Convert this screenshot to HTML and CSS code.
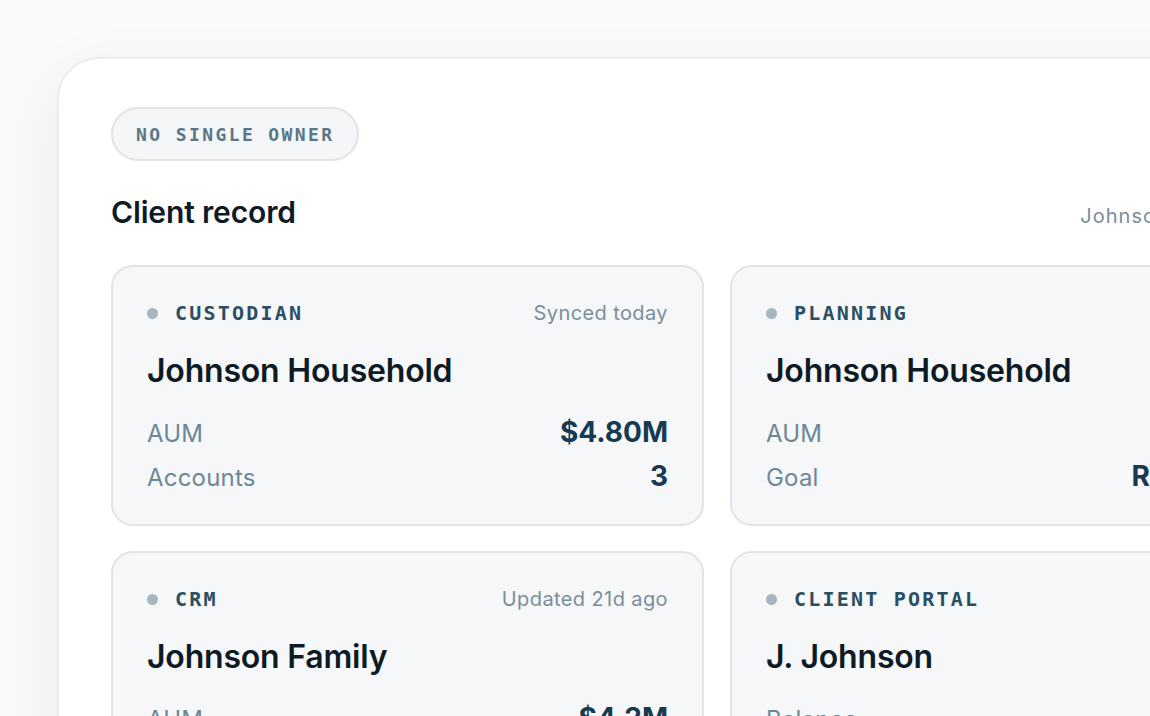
FILE: index.html
```html
<!DOCTYPE html>
<html lang="en">
<head>
<meta charset="utf-8">
<title>Client record</title>
<link rel="stylesheet" href="styles.css">
</head>
<body>
<main class="stage">
  <section class="panel">
    <span class="pill">NO SINGLE OWNER</span>
    <header class="panel-head">
      <h1 class="panel-title">Client record</h1>
      <span class="panel-meta">Johnson · four systems</span>
    </header>
    <div class="grid">
      <article class="card">
        <div class="card-top">
          <span class="source"><span class="dot"></span>CUSTODIAN</span>
          <span class="stamp">Synced today</span>
        </div>
        <h2 class="card-name">Johnson Household</h2>
        <dl class="facts">
          <div class="fact"><dt>AUM</dt><dd>$4.80M</dd></div>
          <div class="fact"><dt>Accounts</dt><dd>3</dd></div>
        </dl>
      </article>
      <article class="card">
        <div class="card-top">
          <span class="source"><span class="dot"></span>PLANNING</span>
          <span class="stamp">3mo ago</span>
        </div>
        <h2 class="card-name">Johnson Household</h2>
        <dl class="facts">
          <div class="fact"><dt>AUM</dt><dd>$4.65M</dd></div>
          <div class="fact"><dt>Goal</dt><dd>Retire at 62</dd></div>
        </dl>
      </article>
      <article class="card">
        <div class="card-top">
          <span class="source"><span class="dot"></span>CRM</span>
          <span class="stamp">Updated 21d ago</span>
        </div>
        <h2 class="card-name">Johnson Family</h2>
        <dl class="facts">
          <div class="fact"><dt>AUM</dt><dd>$4.2M</dd></div>
          <div class="fact"><dt>Last contact</dt><dd>Mar 4</dd></div>
        </dl>
      </article>
      <article class="card">
        <div class="card-top">
          <span class="source"><span class="dot"></span>CLIENT PORTAL</span>
          <span class="stamp">Live</span>
        </div>
        <h2 class="card-name">J. Johnson</h2>
        <dl class="facts">
          <div class="fact"><dt>Balance</dt><dd>$4.79M</dd></div>
          <div class="fact"><dt>Accounts</dt><dd>2</dd></div>
        </dl>
      </article>
    </div>
  </section>
</main>
</body>
</html>
```

FILE: styles.css
```css
* {
  box-sizing: border-box;
}

html,
body {
  margin: 0;
  height: 100%;
}

body {
  background: #fafafa;
  font-family: Inter, "Noto Sans", "Liberation Sans", sans-serif;
  overflow: hidden;
}

.stage {
  padding: 57px 0 0 57px;
}

.panel {
  width: 1380px;
  min-height: 900px;
  background: #ffffff;
  border: 2px solid #ececec;
  border-radius: 42px;
  box-shadow: 0 24px 70px rgba(20, 30, 40, 0.07);
  padding: 48px 52px;
  display: flex;
  flex-direction: column;
  align-items: flex-start;
}

.pill {
  display: inline-flex;
  align-items: center;
  height: 54px;
  padding: 0 22px 0 23px;
  border: 2px solid #e0e4e7;
  border-radius: 27px;
  background: #f4f6f8;
  font-family: "DejaVu Sans Mono", "Liberation Mono", monospace;
  font-weight: 700;
  font-size: 18px;
  letter-spacing: 2.4px;
  color: #5b7686;
}

.panel-head {
  width: 1212px;
  margin-top: 33px;
  display: flex;
  justify-content: space-between;
  align-items: baseline;
}

.panel-title {
  margin: 0;
  font-size: 30px;
  line-height: 36px;
  font-weight: 600;
  letter-spacing: -0.15px;
  color: #0e1b24;
}

.panel-meta {
  font-size: 20px;
  letter-spacing: 1px;
  color: #7a8e9a;
}

.grid {
  margin-top: 35px;
  display: grid;
  grid-template-columns: 593px 593px;
  column-gap: 26px;
  row-gap: 25px;
}

.card {
  height: 261px;
  background: #f5f7f9;
  border: 2px solid #e0e4e7;
  border-radius: 22px;
  padding: 32px 34px 0 34px;
}

.card-top {
  display: flex;
  justify-content: space-between;
  align-items: center;
  height: 28px;
}

.source {
  display: flex;
  align-items: center;
  gap: 17px;
  font-family: "DejaVu Sans Mono", "Liberation Mono", monospace;
  font-weight: 700;
  font-size: 20px;
  letter-spacing: 2.2px;
  color: #2c4e62;
}

.dot {
  width: 11px;
  height: 11px;
  border-radius: 50%;
  background: #a6b5be;
}

.stamp {
  font-size: 20px;
  letter-spacing: 0.4px;
  color: #7a8e9a;
}

.card-name {
  margin: 24px 0 0;
  font-size: 32px;
  line-height: 40px;
  font-weight: 600;
  letter-spacing: -0.2px;
  color: #0e1b24;
}

.facts {
  margin: 24px 0 0;
  display: flex;
  flex-direction: column;
  gap: 10px;
}

.fact {
  display: flex;
  justify-content: space-between;
  align-items: baseline;
  height: 34px;
}

.fact dt {
  font-size: 24px;
  letter-spacing: 0.2px;
  color: #6e8796;
}

.fact dd {
  margin: 0;
  font-size: 28px;
  font-weight: 700;
  color: #163a52;
}
```
